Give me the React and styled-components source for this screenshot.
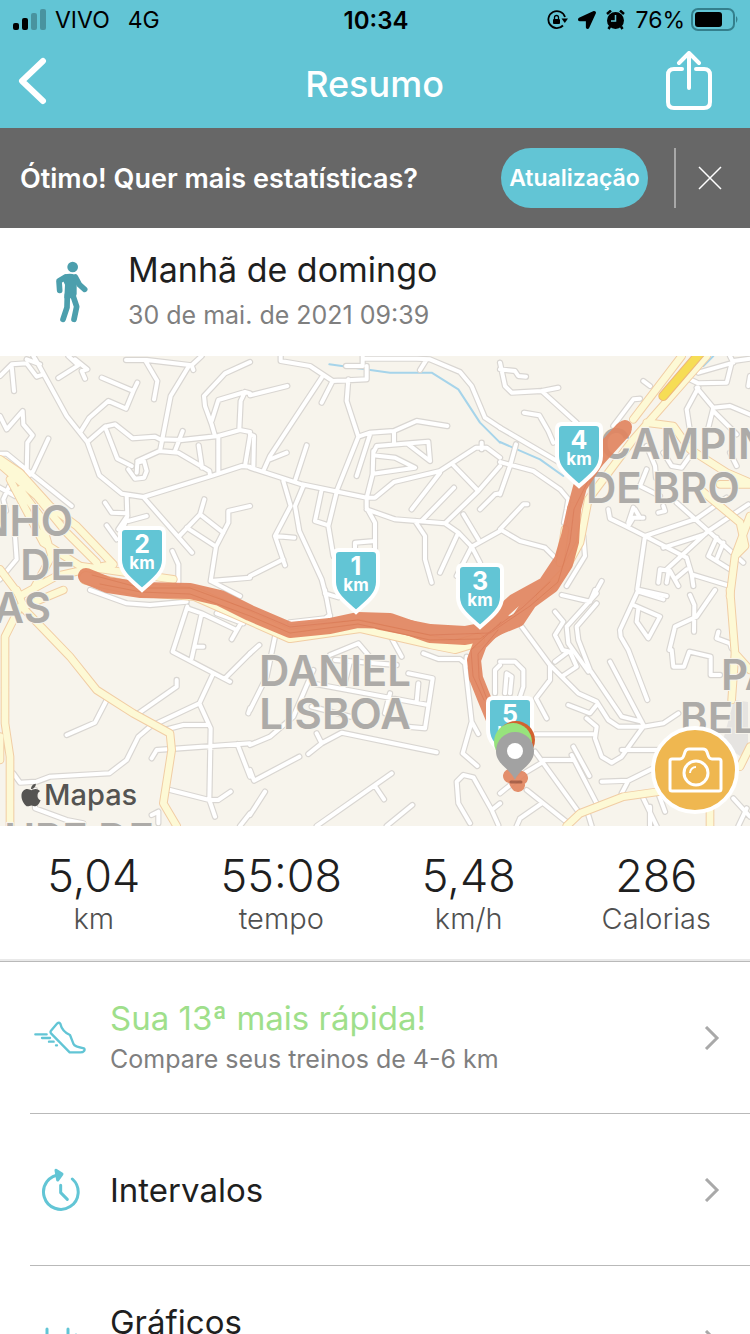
import React from "react";
import styled, { createGlobalStyle } from "styled-components";
import { FaApple, FaLocationArrow } from "react-icons/fa";

const teal = "#62c5d5";

/* Map geometry, one entry per 250x240 tile, three units to a pixel */
const tiles = [
  {
    x: 0,
    y: 0,
    streets:
      "M0 60L35 25L80 22L110 62L130 55M35 30L42 105M80 10L120 25M100 0L115 25L200 180L262 258L298 358L365 413L430 423L640 358L725 330L750 332M175 66L235 28L205 0M225 10L262 40L245 45L255 68M305 65L400 105L412 80M400 105L378 158L325 135L268 185L240 230M378 12L440 12L575 28L605 0M575 28L580 42M435 12L472 75L462 130M568 28L512 120L480 285M262 258L315 212L345 205L398 247L465 242L480 250L545 252L655 240L720 222L750 228M315 212L352 308L395 330M385 340L405 368L432 365L440 345L432 315L412 320L410 350M412 315L478 285L535 290L628 345L630 358M548 225L525 285M596 268L606 335M655 240V352M750 18L675 52L612 120L615 150L635 205L645 240M635 195L655 132L735 108L750 112M735 108L722 135L718 220M750 240L735 330M0 180L20 220L68 165L70 205L98 238L82 260L80 350M145 248L100 345L85 360M0 293L20 293L90 350L215 450M28 390L10 430L18 465M0 395L45 420M315 440L335 470L380 472M380 420L382 480L372 510M382 480L355 520M440 480L385 495M320 508L350 550M430 423L576 590M538 540L600 475L613 430M600 475L670 530M560 515L648 572L685 500L685 465L750 450M648 572L632 675M517 585L535 625V680M632 675L750 665M632 675L720 720M45 540L50 610L0 670",
    avenues:
      "M0 310L60 350L150 450L230 510L340 625M30 370L130 560L240 630L380 650L520 670M0 325L110 420L200 530L290 620M340 625L260 640L170 660L60 720M60 400L120 480L155 600L100 700M0 640L60 720",
  },
  {
    x: 250,
    y: 0,
    streets:
      "M92 0V15L180 30L248 75L350 70V30M288 30H338V0M338 8H500L540 10L630 48L665 90L705 185L750 215M530 10L510 42M215 65L60 300L40 345M110 290L55 312M248 75L215 140M295 70L290 135L325 242L262 400L235 510L250 600M0 118L112 90M0 235L12 240L10 335M170 268L135 375M0 335L155 385L350 425H375L432 378L570 345L605 322L678 275H710L750 305M695 260V280M325 242L360 230L432 225L500 195L592 210M432 225V262M360 235L320 360M370 290L380 270L535 257L540 315L475 265M370 298L435 305L495 335L370 353M370 285L368 355L350 425V455L375 500V600M315 600V560L375 555M350 460L435 490L585 502L625 530L665 572L690 620M665 572L750 525M625 530L570 650M665 572L620 660M570 350L485 460M612 395L515 495M605 322L685 405L585 502M685 405L750 330M750 412L735 415L690 460M640 475L685 550M495 495L525 540V610L545 680M100 375L122 450L75 540L105 628M75 540L133 545M100 610L0 660M160 390L135 450L148 525L215 670L228 720M215 400L195 495L235 508",
    river: "M238 25L420 50H545L625 100L690 200L750 260",
  },
  {
    x: 500,
    y: 0,
    streets:
      "M0 20L15 90L35 110L125 105L175 95M125 105L230 200M0 40L45 45L55 60L78 62M72 170L118 178L145 225L160 260M0 215L180 320M48 265L30 330L0 415M0 318L100 345L180 400L205 430L200 460L192 500M430 75L450 90M420 128L400 130L340 210M0 520L70 445H82M0 520L60 555L135 575L180 620M595 50L700 20L690 0M700 15L750 8M695 20L680 80L595 82L570 70M595 95L560 160L570 225M590 95L640 155L690 150L750 175M640 155L625 215M640 165L710 235M750 60L745 90M440 270L465 330L468 365M490 290L515 330L545 335L570 300M690 290L710 330M440 340L420 390L480 420M325 460L330 488L380 512L435 540L560 605M435 540L412 700M435 540L590 488L680 425M385 500L400 455M405 460L420 485M385 510L400 485L430 485M475 470L495 465L490 450M530 440L625 525L730 620M625 525L500 640M625 525L745 445M490 575L615 535M560 605L575 655L690 690M575 655L580 690M475 680L480 640L510 645L535 690M505 650L500 680M650 545L625 600L690 640M670 560L650 610M412 700L500 720M560 640L530 665M305 675L280 720M250 540L255 600L200 690",
    avenues:
      "M545 0L400 190M620 0L400 250L265 430L240 560L190 650L120 720M195 520L180 620M440 200L520 210L570 280L680 350L750 380M600 400L720 500L735 570L705 600L690 720M660 385H750M750 480L705 600",
    river: "M0 258L120 310L190 360M640 0L610 30",
    highway: "M610 -20L490 120",
  },
  {
    x: 0,
    y: 234,
    streets:
      "M270 0L380 40L450 45L560 35M562 50L518 185L690 275M562 55L605 70L575 205M590 170H610M605 70L710 120M650 70L730 100M725 95L695 148M750 190L675 265M640 250L598 340L632 415L628 630L645 680M598 340L450 410L415 440L380 510L328 550L150 560L110 575L60 578L40 550M500 418L550 405H625M200 435L285 398L320 330M530 270V290L415 370M455 505L470 480L750 460M712 462L750 560M510 600L628 630H655L692 605M105 600V655L200 690L250 700M750 670L720 708M455 675L475 665V700M750 355L745 370",
    avenues:
      "M50 0L75 60L210 200L290 300L400 370L510 430L515 480L490 640L530 708M60 50L15 140V400L30 500V708M0 440V510M70 50L190 0",
  },
  {
    x: 250,
    y: 234,
    streets:
      "M0 190L28 165M75 140L50 260L0 360M190 240L130 380L60 440L0 465M0 540L12 572L148 500M225 0L240 80M225 10L265 22M240 75L225 85L120 97M240 195L325 160L355 195M425 145L455 200M255 210L440 225M300 215L280 295M185 280L535 345M475 250L548 265L525 415L470 410M505 280L500 335M420 310L405 370M185 350L300 380M200 430L215 460L175 492M215 460L275 428L560 487M425 550L200 708M375 588L402 628M487 645L410 708M45 605L0 675M520 190L565 207H630L645 220L665 395L638 490L682 528M665 395L685 432M650 200L648 230M660 700L625 640L620 575L640 555L670 562L725 660L750 640M725 660L745 705M735 310V240L750 225",
  },
  {
    x: 500,
    y: 234,
    streets:
      "M65 110L150 225L235 310L290 335L325 390L355 410H430L490 400L535 370M165 65L190 95L165 135L188 180L210 185L230 230L185 260M165 215L205 185M150 225V270L108 325L140 385M185 15L270 35L285 0M290 10L200 110L205 160L265 245M290 40L230 110L235 150L270 240L365 380L425 395M330 215L430 405M415 0L360 120L362 140L385 180L442 330M415 5L490 28M400 45L480 80L445 145L410 95L415 55M645 0L590 80L525 110L508 180M570 15L583 45L582 125M515 180L520 230H552L568 185L632 200V255H660M655 125L650 145L690 160L695 175M205 345L270 370L290 345M260 385L290 410L285 445L305 500L335 518L365 500L415 430L430 410M365 480H480M105 433H280M105 485L235 665M130 510H220M215 495L290 640M220 470L268 558M130 515L80 545L0 610M80 600L205 700M125 640L60 685L50 708M305 575L385 572L470 530M385 572L365 610M265 675L275 708M430 625L470 708M450 650V708M475 610L495 665M0 215H45L70 240V290L60 320M15 310L20 250L35 260L30 310M700 625L750 680M740 655L715 708",
    avenues:
      "M690 0L705 190L695 330M705 190L750 240M200 708L240 670L370 620L475 605M630 650V708M720 530L750 470",
  },
];

const labels = [
  { text: "CAMPIN", x: 600, y: 103 },
  { text: "DE BRO", x: 586, y: 147 },
  { text: "NHO", x: 73, y: 180, anchor: "end" },
  { text: "DE", x: 76, y: 224, anchor: "end" },
  { text: "AS", x: 51, y: 267, anchor: "end" },
  { text: "DANIEL", x: 335, y: 330, anchor: "middle" },
  { text: "LISBOA", x: 335, y: 373, anchor: "middle" },
  { text: "PA", x: 721, y: 334 },
  { text: "BEL", x: 680, y: 377 },
  { text: "UPE DE", x: 154, y: 498, anchor: "end" },
];

const markers = [
  { km: 4, x: 579, y: 66 },
  { km: 2, x: 142, y: 170 },
  { km: 1, x: 356, y: 192 },
  { km: 3, x: 480, y: 207 },
  { km: 5, x: 510, y: 340 },
];

const stats = [
  { value: "5,04", label: "km" },
  { value: "55:08", label: "tempo" },
  { value: "5,48", label: "km/h" },
  { value: "286", label: "Calorias" },
];

const layer = (name, props) =>
  tiles
    .filter(tile => tile[name])
    .map(tile => (
      <path
        key={`${tile.x}-${tile.y}`}
        d={tile[name]}
        transform={`translate(${tile.x} ${tile.y}) scale(${1 / 3})`}
        {...props}
      />
    ));

const RouteMap = () => (
  <MapDrawing viewBox="0 0 750 470" preserveAspectRatio="xMidYMid slice">
    <rect width="750" height="470" fill="#f7f4ec" />
    <path d="M734 344L748 346V392L740 400L722 388Z" fill="#e6e4e1" />
    <g fill="none" strokeLinecap="round" strokeLinejoin="round">
      {layer("river", { stroke: "#a6d4ea", strokeWidth: 6 })}
      {layer("streets", { stroke: "#d9d6d2", strokeWidth: 19 })}
      {layer("streets", { stroke: "#fff", strokeWidth: 12 })}
      {layer("avenues", { stroke: "#f1cda4", strokeWidth: 26 })}
      {layer("avenues", { stroke: "#fdf9d5", strokeWidth: 20 })}
      {layer("highway", { stroke: "#eeb77c", strokeWidth: 30 })}
      {layer("highway", { stroke: "#f6dd55", strokeWidth: 24 })}
      <path
        d="M86 222L141 234L195 238L290 280L360 270L430 286L455 291L478 284"
        stroke="#f1cda4"
        strokeWidth="14"
      />
      <path
        d="M86 222L141 234L195 238L290 280L360 270L430 286L455 291L478 284"
        stroke="#fdf9d5"
        strokeWidth="12"
      />
    </g>
    {labels.map(label => (
      <MapLabel
        key={label.text + label.y}
        x={label.x}
        y={label.y}
        textAnchor={label.anchor}
      >
        {label.text}
      </MapLabel>
    ))}
    <g
      opacity="0.92"
      fill="none"
      stroke="#e28661"
      strokeLinecap="round"
      strokeLinejoin="round"
    >
      <path
        d="M86 220L108 229L141 234L190 235L220 242L250 257L290 274L330 270L358 264L390 265L430 279L465 281L490 276L503 268"
        strokeWidth="16"
      />
      <path d="M380 266L430 276L465 278L490 273" strokeWidth="16" />
      <path
        d="M484 278L518 264L530 246L552 230L566 208L572 186L574 153L580 131L602 97L625 71"
        strokeWidth="14"
      />
      <path d="M490 272L504 254L514 245L545 228L561 204L568 180L574 153" strokeWidth="14" />
      <path d="M594 106L623 74" strokeWidth="17" />
      <path d="M503 264L480 288L474 304L476 322L484 342L494 366L515 410" strokeWidth="14" />
      <path d="M510 420L521 422M516 426L518 429" strokeWidth="14" />
      <g stroke="#d8714c" strokeWidth="1" opacity="0.7">
        <path d="M92 219L141 232L190 232L250 254L290 271L358 264L430 279L490 277L530 250L558 226L570 186L574 153L602 97" />
        <path d="M100 228L141 236L190 238L250 260L290 277L358 268L430 284L480 283L522 252L550 226" />
        <path d="M498 274L478 298L479 322L488 346M501 266L471 294L473 320L484 344" />
      </g>
      <path d="M511 426H521" stroke="#a3563c" strokeWidth="3" />
    </g>
    {markers.map(marker => (
      <g key={marker.km} transform={`translate(${marker.x} ${marker.y})`}>
        <path
          d="M-17 2H17Q22 2 22 7V34C22 47 10 55 0 64C-10 55 -22 47 -22 34V7Q-22 2 -17 2Z"
          fill={teal}
          stroke="#fff"
          strokeWidth="4"
        />
        <MarkerText size={25} y="27">
          {marker.km}
        </MarkerText>
        <MarkerText size={17} y="43">
          km
        </MarkerText>
      </g>
    ))}
    <circle cx="516" cy="384" r="19" fill="#d2622f" />
    <circle cx="513" cy="386" r="19" fill="#97e37c" />
    <path
      d="M515 424C511 413 496 409 496 395A19 19 0 0 1 534 395C534 409 519 413 515 424Z"
      fill="#a2a2a2"
    />
    <circle cx="515" cy="395" r="8" fill="#fff" />
  </MapDrawing>
);

const StatusBar = () => (
  <Status>
    <StatusSide>
      <svg width="34" height="22" viewBox="0 0 34 22">
        <rect x="0" y="14" width="6" height="7" rx="2" />
        <rect x="9" y="9" width="6" height="12" rx="2" />
        <rect x="18" y="4" width="6" height="17" rx="2" opacity="0.25" />
        <rect x="27" y="0" width="6" height="21" rx="2" opacity="0.25" />
      </svg>
      <Carrier>VIVO</Carrier>
      <span>4G</span>
    </StatusSide>
    <Clock>10:34</Clock>
    <StatusSide end>
      <svg width="21" height="20" viewBox="0 0 21 20" fill="none">
        <path d="M18 7A8.500 8.500 0 1 0 16 15.500" stroke="#000" strokeWidth="1.800" />
        <path d="M14.500 8.500H21L17.800 13Z" fill="#000" />
        <rect x="6" y="9" width="7" height="5" rx="1" fill="#000" />
        <path d="M7.500 9V7.500A2 2 0 0 1 11.500 7.500V9" stroke="#000" strokeWidth="1.300" />
      </svg>
      <FaLocationArrow size={18} />
      <svg width="19" height="20" viewBox="0 0 19 20">
        <path d="M1 4L5 0.500M18 4L14 0.500M4 16.500L2.500 19M15 16.500L16.500 19" stroke="#000" strokeWidth="2.500" />
        <circle cx="9.500" cy="10.500" r="8.500" />
        <path d="M9.500 5V11H5" fill="none" stroke={teal} strokeWidth="1.500" />
      </svg>
      <span>76%</span>
      <svg width="48" height="24" viewBox="0 0 48 24">
        <rect x="1" y="1" width="42" height="21" rx="6" fill="none" stroke="#347f8c" strokeWidth="2" />
        <rect x="4" y="4" width="27" height="15" rx="3" />
        <path d="M45 8Q48 11 45 15Z" fill="#347f8c" />
      </svg>
    </StatusSide>
  </Status>
);

const WalkIcon = () => (
  <svg width="36" height="64" viewBox="160 390 108 192" fill="none">
    <circle cx="216" cy="411" r="16" fill="#4c9fad" />
    <path
      d="M190 435Q208 427 224 435Q233 438 232 446L228 462L228 492L224 505H191L193 464L186 450Z"
      fill="#4c9fad"
    />
    <g stroke="#4c9fad" strokeWidth="17" strokeLinecap="round" strokeLinejoin="round">
      <path d="M195 441L175 453L177 481" />
      <path d="M224 441L236 464L252 478" />
      <path d="M200 495L199 532L187 568" />
      <path d="M216 494L228 530L220 568" />
    </g>
  </svg>
);

const ShoeIcon = () => (
  <svg width="52" height="34" viewBox="0 0 156 102" fill="none">
    <g stroke={teal} strokeWidth="7" strokeLinecap="round" strokeLinejoin="round">
      <path d="M70 7Q75 3 79 8Q84 31 108 42L119 70Q122 77 150 82Q154 87 149 91Q147 94 139 94H107L51 37Q48 33 51 29Z" />
      <path d="M4 40H38M24 51H48M45 62H59M66 73H69" />
    </g>
  </svg>
);

const IntervalIcon = () => (
  <svg width="40" height="44" viewBox="0 0 120 132" fill="none">
    <g stroke={teal} strokeWidth="9" strokeLinecap="round" strokeLinejoin="round">
      <path d="M97 33A52 52 0 1 1 62 20" />
      <path d="M48 7L66 18L53 36Z" fill={teal} />
      <path d="M62 52V74L82 94" />
    </g>
  </svg>
);

const ChartIcon = () => (
  <svg width="36" height="30" viewBox="0 0 36 30" fill="none">
    <path d="M5 2V28M26 2V28M15 9V28M34 8V28" stroke={teal} strokeWidth="3" strokeLinecap="round" />
  </svg>
);

const rows = [
  {
    title: "Sua 13ª mais rápida!",
    detail: "Compare seus treinos de 4-6 km",
    color: "#9fdf8b",
    icon: <ShoeIcon />,
  },
  { title: "Intervalos", icon: <IntervalIcon /> },
  { title: "Gráficos", detail: "", icon: <ChartIcon /> },
];

export default function App() {
  return (
    <Screen>
      <GlobalStyle />
      <Header>
        <StatusBar />
        <NavBar>
          <IconButton aria-label="Voltar">
            <svg width="30" height="48" viewBox="0 0 30 48" fill="none">
              <path d="M25 4L4 24L25 44" stroke="#fff" strokeWidth="6" strokeLinecap="round" strokeLinejoin="round" />
            </svg>
          </IconButton>
          <Title>Resumo</Title>
          <IconButton aria-label="Compartilhar">
            <svg width="48" height="60" viewBox="0 0 48 60" fill="none">
              <path
                d="M17 18H9Q3 18 3 24V51Q3 57 9 57H39Q45 57 45 51V24Q45 18 39 18H31M24 37V2M14 12L24 2L34 12"
                stroke="#fff"
                strokeWidth="4"
                strokeLinecap="round"
                strokeLinejoin="round"
              />
            </svg>
          </IconButton>
        </NavBar>
      </Header>

      <Banner>
        <BannerText>Ótimo! Quer mais estatísticas?</BannerText>
        <UpgradeButton>Atualização</UpgradeButton>
        <Divider />
        <IconButton aria-label="Fechar">
          <svg width="24" height="24" viewBox="0 0 24 24">
            <path d="M1 1L23 23M23 1L1 23" stroke="#fff" strokeWidth="1.500" />
          </svg>
        </IconButton>
      </Banner>

      <Activity>
        <ActivityIcon>
          <WalkIcon />
        </ActivityIcon>
        <div>
          <ActivityName>Manhã de domingo</ActivityName>
          <ActivityDate>30 de mai. de 2021 09:39</ActivityDate>
        </div>
      </Activity>

      <MapArea>
        <RouteMap />
        <MapCredit>
          <FaApple size={26} />
          Mapas
        </MapCredit>
        <CameraButton aria-label="Adicionar foto">
          <svg width="56" height="48" viewBox="0 0 56 48" fill="none" stroke="#fff" strokeWidth="3" strokeLinejoin="round">
            <path d="M5 13H13Q16 13 17 9L18 6Q19 3 22 3H36Q39 3 40 6L41 9Q42 13 45 13H52Q54 13 54 15V43Q54 45 52 45H5Q3 45 3 43V15Q3 13 5 13Z" />
            <circle cx="29" cy="27" r="12" />
            <path d="M23 27A6 6 0 0 1 29 21" strokeWidth="2" />
          </svg>
        </CameraButton>
      </MapArea>

      <Stats>
        {stats.map(stat => (
          <Stat key={stat.label}>
            <StatValue>{stat.value}</StatValue>
            <StatLabel>{stat.label}</StatLabel>
          </Stat>
        ))}
      </Stats>

      <Rows>
        {rows.map(row => (
          <li key={row.title}>
            <RowButton>
              <RowIcon>{row.icon}</RowIcon>
              <RowText>
                <RowTitle color={row.color}>{row.title}</RowTitle>
                {row.detail !== undefined && <RowDetail>{row.detail}</RowDetail>}
              </RowText>
              <svg width="16" height="24" viewBox="0 0 16 24" fill="none">
                <path d="M2 1L13 12L2 23" stroke="#a9a9a9" strokeWidth="3" />
              </svg>
            </RowButton>
          </li>
        ))}
      </Rows>
    </Screen>
  );
}

const GlobalStyle = createGlobalStyle`
  * {
    box-sizing: border-box;
  }

  body {
    margin: 0;
    background: white;
    color: #1f1f1f;
    font-family: Inter, "Liberation Sans", sans-serif;
  }

  h1, h2, p, ul {
    margin: 0;
    padding: 0;
  }

  button {
    font-family: inherit;
    cursor: pointer;
  }

  svg {
    display: block;
    flex: none;
  }
`;

const Screen = styled.div`
  height: 100vh;
  overflow: hidden;
`;

const Header = styled.header`
  background: ${teal};
`;

const Status = styled.div`
  height: 40px;
  padding: 0 11px 0 13px;
  display: grid;
  grid-template-columns: 1fr auto 1fr;
  align-items: center;
  color: black;
  font-size: 23px;
`;

const StatusSide = styled.div.withConfig({
  shouldForwardProp: prop => prop !== "end",
})`
  display: flex;
  align-items: center;
  gap: ${props => (props.end ? "10px" : "8px")};
  justify-content: ${props => (props.end ? "flex-end" : "flex-start")};

  svg:last-child {
    margin-left: -4px;
  }
`;

const Carrier = styled.span`
  margin-right: 10px;
`;

const Clock = styled.span`
  font-size: 24px;
  font-weight: 600;
`;

const NavBar = styled.div`
  height: 88px;
  padding: 0 37px 6px 18px;
  display: grid;
  grid-template-columns: 48px 1fr 48px;
  align-items: center;
`;

const Title = styled.h1`
  padding: 6px 0 0 18px;
  color: white;
  font-size: 36px;
  font-weight: 500;
  line-height: 44px;
  text-align: center;
`;

const IconButton = styled.button`
  padding: 0;
  border: none;
  background: none;
`;

const Banner = styled.section`
  height: 100px;
  padding: 0 28px 0 20px;
  display: flex;
  align-items: center;
  background: #676767;
  color: white;
`;

const BannerText = styled.p`
  flex: 1;
  font-size: 27px;
  font-weight: 600;
  white-space: nowrap;
`;

const UpgradeButton = styled.button`
  width: 147px;
  height: 60px;
  padding: 0;
  border: none;
  border-radius: 30px;
  background: ${teal};
  color: white;
  font-size: 23px;
  font-weight: 600;
`;

const Divider = styled.div`
  width: 2px;
  height: 60px;
  margin: 0 22px 0 26px;
  background: #a8a8a8;
`;

const Activity = styled.section`
  height: 128px;
  padding: 0 40px;
  display: flex;
  align-items: center;
  gap: 24px;
`;

const ActivityIcon = styled.div`
  width: 64px;
  display: flex;
  justify-content: center;
`;

const ActivityName = styled.h2`
  font-size: 34px;
  font-weight: 400;
  line-height: 46px;
`;

const ActivityDate = styled.p`
  color: #7f7f7f;
  font-size: 25px;
  font-weight: 400;
  line-height: 44px;
`;

const MapArea = styled.section`
  position: relative;
  height: 470px;
`;

const MapDrawing = styled.svg`
  width: 100%;
  height: 100%;
`;

const MapLabel = styled.text`
  fill: #adaba8;
  stroke: #f7f4ec;
  stroke-width: 2px;
  paint-order: stroke;
  font-size: 42px;
  font-weight: 600;
`;

const MarkerText = styled.text.withConfig({
  shouldForwardProp: prop => prop !== "size",
})`
  fill: white;
  font-size: ${props => props.size}px;
  font-weight: 700;
  text-anchor: middle;
`;

const MapCredit = styled.div`
  position: absolute;
  left: 18px;
  bottom: 14px;
  display: flex;
  align-items: center;
  color: #555452;
  font-size: 29px;
  font-weight: 500;
`;

const CameraButton = styled.button`
  position: absolute;
  right: 11px;
  bottom: 12px;
  width: 88px;
  height: 88px;
  padding: 0;
  display: grid;
  place-items: center;
  border: 4px solid white;
  border-radius: 50%;
  background: #efb750;
`;

const Stats = styled.section`
  height: 136px;
  padding-top: 24px;
  display: grid;
  grid-template-columns: repeat(4, 1fr);
  border-bottom: 1px solid #b9b9b9;
  box-shadow: inset 0 -2px #e9e9e9;
`;

const Stat = styled.div`
  text-align: center;
`;

const StatValue = styled.p`
  font-size: 45px;
  font-weight: 300;
  line-height: 52px;
`;

const StatLabel = styled.p`
  color: #505050;
  font-size: 29px;
  font-weight: 300;
  line-height: 34px;
`;

const Rows = styled.ul`
  padding-left: 30px;
  list-style: none;
`;

const RowButton = styled.button`
  width: 100%;
  height: 152px;
  padding: 0 30px 0 0;
  display: flex;
  align-items: center;
  gap: 20px;
  border: none;
  border-bottom: 1px solid #b9b9b9;
  background: none;
  color: inherit;
  text-align: left;
`;

const RowIcon = styled.span`
  width: 60px;
  display: flex;
  justify-content: center;
`;

const RowText = styled.span`
  flex: 1;
`;

const RowTitle = styled.span`
  display: block;
  color: ${props => props.color || "#1f1f1f"};
  font-size: 33px;
  line-height: 42px;
`;

const RowDetail = styled.span`
  display: block;
  min-height: 40px;
  color: #7f7f7f;
  font-size: 25px;
  font-weight: 400;
  line-height: 40px;
`;
